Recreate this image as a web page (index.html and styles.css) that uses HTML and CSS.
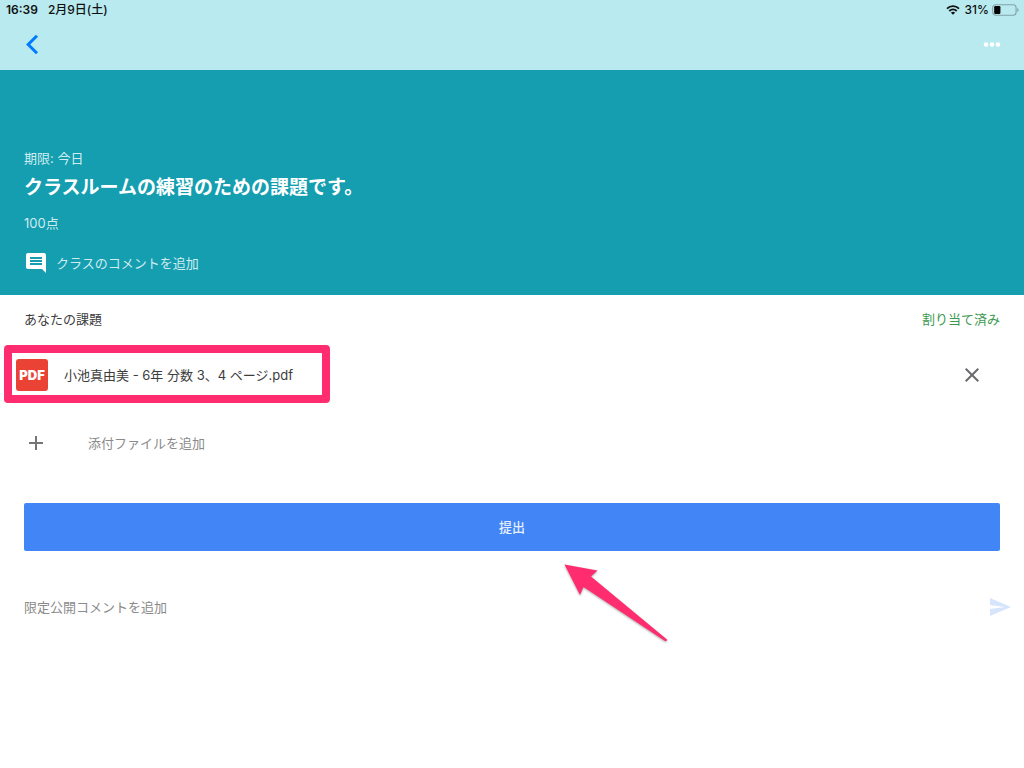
FILE: index.html
```html
<!DOCTYPE html>
<html lang="ja">
<head>
<meta charset="utf-8">
<meta name="viewport" content="width=device-width, initial-scale=1">
<title>クラスルームの課題</title>
<link rel="stylesheet" href="styles.css">
</head>
<body>
<header class="topbar">
  <div class="status">
    <span class="status-time">16:39</span>
    <span class="status-date">2月9日(土)</span>
    <svg class="status-wifi" viewBox="0 0 14 10" aria-hidden="true">
      <path d="M1 3.6a8.6 8.6 0 0 1 12 0M3.3 6a5.3 5.3 0 0 1 7.4 0" fill="none" stroke="#111" stroke-width="1.9"/>
      <path d="M7 9.8 4.9 7.7a3 3 0 0 1 4.2 0z" fill="#111"/>
    </svg>
    <span class="status-level">31%</span>
    <svg class="status-battery" viewBox="0 0 27 12" aria-hidden="true">
      <rect x=".7" y=".7" width="23.4" height="10.6" rx="3" fill="none" stroke="#82a3a7" stroke-width="1.1"/>
      <rect x="2.2" y="2.1" width="6.2" height="7.8" rx="1.2" fill="#000"/>
      <path d="M25.2 4.1q1.4.5 1.4 1.9t-1.4 1.9z" fill="#82a3a7"/>
    </svg>
  </div>
  <nav class="nav">
    <button class="icon-button" type="button" aria-label="戻る">
      <svg width="16" height="24" viewBox="0 0 16 24"><path d="M13 2.8 4.2 11.5 13 20.2" fill="none" stroke="#007aff" stroke-width="3"/></svg>
    </button>
    <button class="icon-button" type="button" aria-label="その他">
      <svg width="18" height="24" viewBox="0 0 18 24" fill="#fff"><circle cx="3" cy="11.5" r="2.3"/><circle cx="9" cy="11.5" r="2.3"/><circle cx="15" cy="11.5" r="2.3"/></svg>
    </button>
  </nav>
</header>
<main>
  <section class="hero">
    <p class="due">期限: 今日</p>
    <h1 class="title">クラスルームの練習のための課題です。</h1>
    <p class="points">100点</p>
    <button class="class-comment" type="button">
      <svg width="24" height="24" viewBox="0 0 24 24" aria-hidden="true"><path d="M21.99 4c0-1.1-.89-2-1.99-2H4c-1.1 0-2 .9-2 2v12c0 1.1.9 2 2 2h14l4 4-.01-18zM18 14H6v-2h12v2zm0-3H6V9h12v2zm0-3H6V6h12v2z" fill="#fff"/></svg>
      クラスのコメントを追加
    </button>
  </section>
  <section class="work">
    <div class="work-head">
      <h2 class="work-title">あなたの課題</h2>
      <span class="work-state">割り当て済み</span>
    </div>
    <div class="file">
      <span class="file-badge">PDF</span>
      <span class="file-name">小池真由美 - 6年 分数 3、4 ページ.pdf</span>
      <button class="icon-button file-remove" type="button" aria-label="削除">
        <svg width="24" height="24" viewBox="0 0 24 24"><path d="m5.7 5.7 12.6 12.6M18.3 5.7 5.7 18.3" stroke="#6b6b6f" stroke-width="2"/></svg>
      </button>
      <span class="highlight"></span>
    </div>
    <button class="attach" type="button">
      <svg width="24" height="24" viewBox="0 0 24 24" aria-hidden="true"><path d="M12 5v14M5 12h14" stroke="#757575" stroke-width="2"/></svg>
      添付ファイルを追加
    </button>
    <div class="submit-area">
      <button class="submit" type="button">提出</button>
      <svg class="arrow" viewBox="0 0 106 80" aria-hidden="true"><path d="M1.5 1.5 34.5 7.5 28 13.5 104 76.5Q104.500 78.500 102 78L20.500 24 17 32z" fill="#ff2d6f"/></svg>
    </div>
    <form class="private">
      <input class="private-input" type="text" aria-label="限定公開コメント" placeholder="限定公開コメントを追加">
      <button class="icon-button" type="button" aria-label="送信">
        <svg width="24" height="24" viewBox="0 0 24 24"><path d="M2.01 21 23 12 2.01 3 2 10l15 2-15 2z" fill="#d6e5fc"/></svg>
      </button>
    </form>
  </section>
</main>
</body>
</html>
```
FILE: styles.css
```css
* { box-sizing: border-box; }

body {
  min-height: 100vh;
  margin: 0;
  background: #fff;
  color: #3c3c3c;
  font: 13px/20px Inter, "Noto Sans CJK JP", sans-serif;
}

h1, h2, p { margin: 0; }

button, input {
  border: 0;
  padding: 0;
  background: none;
  color: inherit;
  font: inherit;
}

button { cursor: pointer; }
svg { display: block; flex: none; }

.topbar { background: #b8eaef; }

.status {
  display: flex;
  align-items: center;
  height: 20px;
  padding: 0 5px 0 6px;
  color: #111;
  font-size: 12px;
  font-weight: 600;
}

.status-date { margin-left: 10px; font-weight: 500; }
.status-wifi { width: 14px; height: 10px; margin-left: auto; }
.status-level { margin: 0 3px 0 5px; font-weight: 500; }
.status-battery { width: 27px; height: 12px; }

.nav {
  display: flex;
  align-items: center;
  justify-content: space-between;
  height: 50px;
  padding: 0 23px 0 24px;
}

.icon-button {
  display: flex;
  align-items: center;
  justify-content: center;
}

.hero {
  padding: 78px 24px 20px;
  background: #149eb0;
  color: #d0ecef;
}

.title {
  margin-top: 6px;
  color: #fff;
  font-size: 19px;
  line-height: 28px;
  font-weight: 700;
}

.points { margin-top: 11px; }

.class-comment {
  display: flex;
  align-items: center;
  gap: 8px;
  height: 24px;
  margin-top: 18px;
}

.work-head {
  display: flex;
  align-items: center;
  justify-content: space-between;
  height: 48px;
  padding: 0 24px;
}

.work-title { font-size: 13px; font-weight: 400; }
.work-state { color: #3d9950; }

.file {
  position: relative;
  display: flex;
  align-items: center;
  gap: 16px;
  height: 64px;
  padding: 0 40px 0 16px;
}

.file-badge {
  width: 32px;
  height: 32px;
  border-radius: 3px;
  background: #ea4335;
  color: #fff;
  font-size: 13px;
  line-height: 32px;
  font-weight: 900;
  text-align: center;
}

.file-remove { margin-left: auto; }

.highlight {
  position: absolute;
  top: 2px;
  left: 4px;
  width: 326px;
  height: 58px;
  border: 8px solid #ff2d6f;
  border-radius: 4px;
  pointer-events: none;
}

.attach {
  display: flex;
  align-items: center;
  gap: 40px;
  width: 100%;
  height: 72px;
  padding: 0 24px;
  color: #8a8a8a;
}

.submit-area {
  position: relative;
  padding: 24px 24px 32px;
}

.submit {
  width: 100%;
  height: 48px;
  border-radius: 2px;
  background: #4285f6;
  color: #e6effe;
  font-weight: 500;
}

.arrow {
  position: absolute;
  top: 84px;
  left: 55%;
  width: 106px;
  height: 80px;
  pointer-events: none;
  filter: drop-shadow(0 1px 1px rgb(0 0 0 / 35%));
}

.private {
  display: flex;
  align-items: center;
  height: 48px;
  padding: 0 12px 0 24px;
}

.private-input { flex: 1; min-width: 0; height: 40px; outline: 0; }
.private-input::placeholder { color: #8a8a8a; opacity: 1; }
```
